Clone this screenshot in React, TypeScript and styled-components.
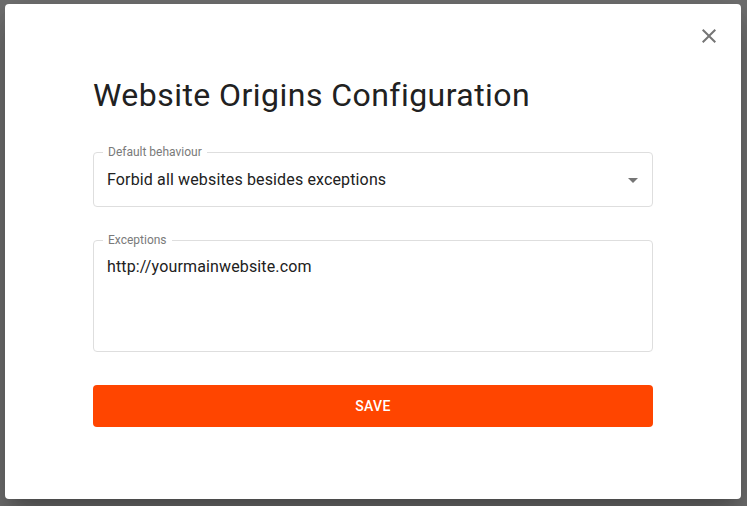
import React from "react";
import styled, { createGlobalStyle } from "styled-components";

const GlobalStyle = createGlobalStyle`
  html, body {
    margin: 0;
    padding: 0;
    height: 100%;
  }
  body {
    background: #707070;
    font-family: Roboto, "Liberation Sans", Arial, sans-serif;
    overflow: hidden;
  }
`;

const Backdrop = styled.div`
  display: flex;
  align-items: flex-start;
  padding: 4px 0 0 5px;
  height: 506px;
  box-sizing: border-box;
`;

const Dialog = styled.div`
  position: relative;
  width: 736px;
  height: 495px;
  box-sizing: border-box;
  background: #fff;
  border-radius: 4px;
  padding: 71px 88px 0;
  box-shadow: 0 11px 15px -7px rgba(0, 0, 0, 0.2),
    0 24px 38px 3px rgba(0, 0, 0, 0.14), 0 9px 46px 8px rgba(0, 0, 0, 0.12);
  display: flex;
  flex-direction: column;
`;

const CloseButton = styled.button`
  position: absolute;
  top: 8px;
  right: 8px;
  width: 48px;
  height: 48px;
  border: 0;
  padding: 0;
  background: transparent;
  display: flex;
  align-items: center;
  justify-content: center;
  cursor: pointer;
`;

const Title = styled.h2`
  margin: 0;
  font-size: 32px;
  line-height: 40px;
  font-weight: 400;
  letter-spacing: 0.45px;
  color: #212121;
`;

const Field = styled.fieldset<{ $top: number }>`
  margin: ${(p) => p.$top}px 0 0;
  padding: 0 13px;
  border: 1px solid #dedede;
  border-radius: 4px;
  min-width: 0;
`;

const Legend = styled.legend`
  margin-left: -4px;
  padding: 0 5px;
  font-size: 12px;
  line-height: 16px;
  color: #7a7a7a;
`;

const SelectRow = styled.div`
  display: flex;
  align-items: center;
  justify-content: space-between;
  padding: 8px 0 14px;
`;

const Value = styled.div<{ $minHeight?: number }>`
  font-size: 16px;
  line-height: 24px;
  letter-spacing: 0.14px;
  color: #212121;
  min-height: ${(p) => p.$minHeight ?? 24}px;
`;

const TextBody = styled.div`
  padding: 7px 0 0;
`;

const Arrow = styled.svg`
  width: 24px;
  height: 24px;
  margin-right: -6px;
  fill: #757575;
`;

const SaveButton = styled.button`
  margin-top: 33px;
  height: 42px;
  border: 0;
  border-radius: 4px;
  background: #ff4500;
  color: #fff;
  font-family: Roboto, "Liberation Sans", Arial, sans-serif;
  font-size: 14px;
  font-weight: 500;
  letter-spacing: 0.4px;
  text-transform: uppercase;
  cursor: pointer;
`;

export default function App() {
  return (
    <>
      <GlobalStyle />
      <Backdrop>
        <Dialog>
          <CloseButton aria-label="close">
            <svg width="24" height="24" viewBox="0 0 24 24" fill="#757575">
              <path d="M19 6.41 17.59 5 12 10.59 6.41 5 5 6.41 10.59 12 5 17.59 6.41 19 12 13.41 17.59 19 19 17.59 13.41 12z" />
            </svg>
          </CloseButton>
          <Title>Website Origins Configuration</Title>
          <Field $top={29}>
            <Legend>Default behaviour</Legend>
            <SelectRow>
              <Value>Forbid all websites besides exceptions</Value>
              <Arrow viewBox="0 0 24 24">
                <path d="M7 10l5 5 5-5z" />
              </Arrow>
            </SelectRow>
          </Field>
          <Field $top={25}>
            <Legend>Exceptions</Legend>
            <TextBody>
              <Value $minHeight={96}>http://yourmainwebsite.com</Value>
            </TextBody>
          </Field>
          <SaveButton>Save</SaveButton>
        </Dialog>
      </Backdrop>
    </>
  );
}
